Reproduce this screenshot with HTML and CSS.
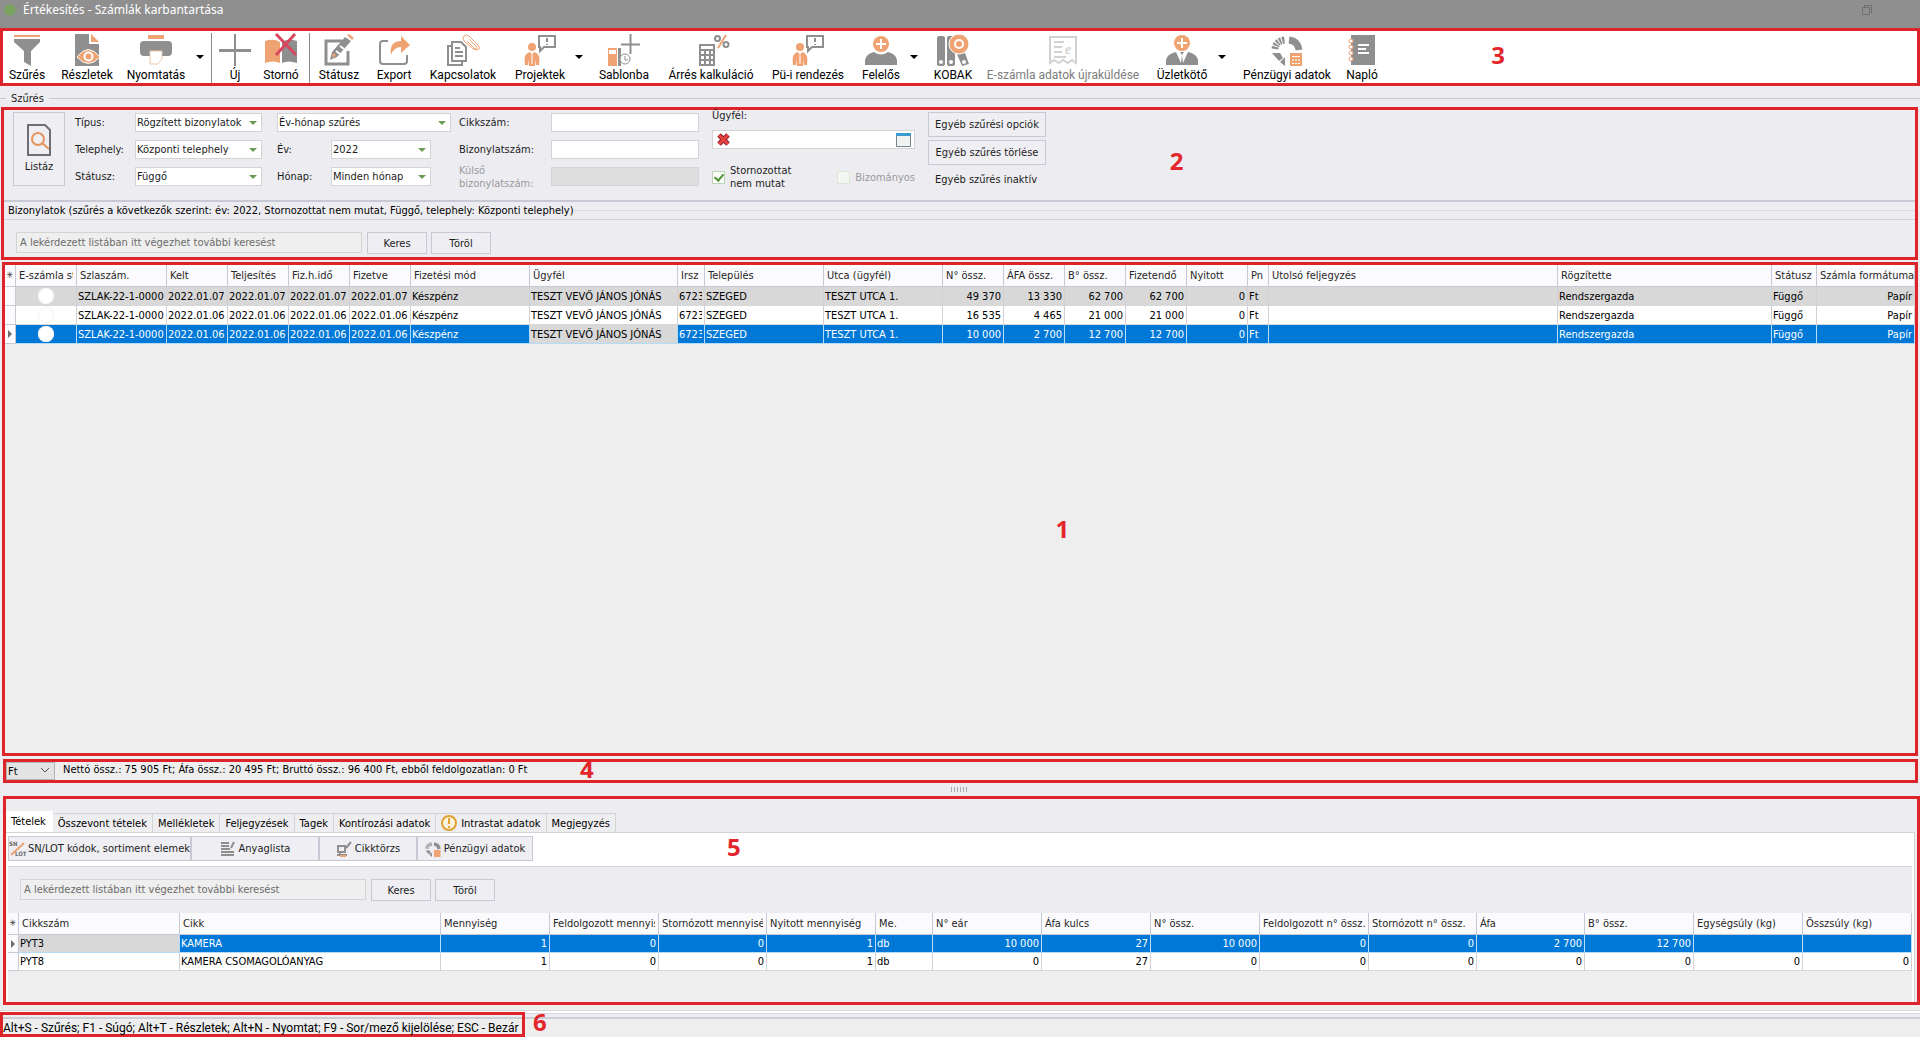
FILE: index.html
```html
<!DOCTYPE html>
<html lang="hu">
<head>
<meta charset="utf-8">
<title>Értékesítés - Számlák karbantartása</title>
<link rel="stylesheet" href="styles.css">
</head>
<body>
<header class="titlebar">
  <svg class="app-icon" viewBox="0 0 14 14" aria-hidden="true"><circle cx="7" cy="7" r="5"/><path d="M7 0v14M0 7h14M2 2l10 10M12 2L2 12"/></svg>
  <h1 class="title">Értékesítés - Számlák karbantartása</h1>
  <button class="restore" aria-label="Visszaállítás"><svg viewBox="0 0 12 12"><path d="M1.500 3.500h7v7h-7zM3.500 3.500v-2h7v7h-2"/></svg></button>
</header>

<nav class="toolbar frame">
  <button class="tool"><svg class="ico" viewBox="0 0 32 32"><path class="o" d="M3 1h26v2H3z"/><path class="g" d="M3 5h26v3l-9 9v15l-7-4V17L3 8z"/></svg>Szűrés</button>
  <button class="tool"><svg class="ico" viewBox="0 0 32 32"><path class="g" d="M4 0h14v10h10v22H4z"/><path class="o" d="M20 0l8 8h-8z"/><path class="o ring" d="M6 23q11-15 23 0q-12 13-23 0z"/><circle class="w" cx="17.500" cy="22.500" r="5"/><circle class="o" cx="17.500" cy="22.500" r="3"/></svg>Részletek</button>
  <button class="tool"><svg class="ico" viewBox="0 0 32 32"><path class="o" d="M8 1h16v4H8z"/><rect class="g" y="7" width="32" height="15" rx="4"/><path class="paper" d="M10 17h12v8l-4 5h-8z"/></svg>Nyomtatás</button>
  <button class="drop" aria-label="Nyomtatás menü"></button>
  <span class="sep"></span>
  <button class="tool"><svg class="ico" viewBox="0 0 32 32"><path class="g" d="M15 0h2v15h15v3H17v14h-2V18H0v-3h15z"/></svg>Új</button>
  <button class="tool"><svg class="ico" viewBox="0 0 32 32"><path class="o" d="M0 7q9-3 15 1v21q-6-3-15 0z"/><path class="g" d="M32 7q-9-3-15 1v21q6-3 15 0z"/><path class="cross" d="M11 0l20 21M30 0L11 21"/></svg>Stornó</button>
  <span class="sep"></span>
  <button class="tool"><svg class="ico" viewBox="0 0 32 32"><path class="gs3" d="M19 7H3v23h22V17"/><path class="g" d="M7 26l2-8L22 3l6 4-14 16z"/><path class="o" d="M24 1l2-1 5 4-2 2zM9 21l2-2 2 2-3 3z"/><path class="ws" d="M13 17l4 3M17 12l4 3"/></svg>Státusz</button>
  <button class="tool"><svg class="ico" viewBox="0 0 32 32"><path class="gs2" d="M10 7H5q-3 0-3 3v17q0 3 3 3h21q3 0 3-3v-6"/><path class="o" d="M13 21q-2-14 10-14V2l9 9-9 8v-6q-7 0-10 8z"/></svg>Export</button>
  <button class="tool"><svg class="ico" viewBox="0 0 32 32"><path class="gs2" d="M5 8h9l5 5v14H5zM5 12H1v19h14v-4M8 14h5M8 18h8M8 22h8"/><path class="clip-line" d="M20 7l8 8q3 2 4 0t-1-4l-9-9q-3-2-5 0t0 5l9 8q2 1 3 0t0-3l-7-7"/></svg>Kapcsolatok</button>
  <button class="tool"><svg class="ico" viewBox="0 0 32 32"><circle class="o" cx="8" cy="13" r="4"/><path class="o" d="M1 31q-2-12 5-13l2 3 2-3q7 1 5 13h-3v-6l-1 7H5l-1-7v6z"/><path class="ws1" d="M8 21v9"/><path class="gs2" d="M15 2h16v11H20l-4 4v-4h-1zM23 4v4M23 10v1"/></svg>Projektek</button>
  <button class="drop" aria-label="Projektek menü"></button>
  <button class="tool"><svg class="ico" viewBox="0 0 32 32"><path class="o" d="M0 14h9v18H0z"/><path class="w" d="M1 16h7v4H1z"/><path class="g" d="M10 14h3v18h-3z"/><circle class="clock" cx="17" cy="25" r="5"/><path class="gs1" d="M17 22v4h3"/><path class="gs2" d="M22.500 0v20M13 10.500h19"/></svg>Sablonba</button>
  <button class="tool"><svg class="ico" viewBox="0 0 32 32"><path class="gs2" d="M5 11h14v20H5zM5 16h14M5 21h14M5 26h14M10 16v15M15 16v15"/><circle class="gs2" cx="22.500" cy="4.500" r="2.500"/><circle class="gs2" cx="31" cy="10.500" r="2.500"/><path class="os" d="M31 1l-8 13"/></svg>Árrés kalkuláció</button>
  <button class="tool"><svg class="ico" viewBox="0 0 32 32"><circle class="o" cx="8" cy="13" r="4"/><path class="o" d="M1 31q-2-12 5-13l2 3 2-3q7 1 5 13h-3v-6l-1 7H5l-1-7v6z"/><path class="ws1" d="M8 21v9"/><path class="gs2" d="M15 2h16v11H20l-4 4v-4h-1zM23 4v4M23 10v1"/></svg>Pü-i rendezés</button>
  <button class="tool"><svg class="ico" viewBox="0 0 32 32"><path class="g" d="M0 31v-5q1-6 9-8 7 5 14 0 8 2 9 8v5z"/><circle class="o" cx="16" cy="10" r="8"/><path class="ws" d="M16 5v10M11 10h10"/></svg>Felelős</button>
  <button class="drop" aria-label="Felelős menü"></button>
  <button class="tool"><svg class="ico" viewBox="0 0 32 32"><rect class="g" x="0" y="2" width="8" height="30" rx="2"/><rect class="g" x="10" y="2" width="8" height="30" rx="2"/><path class="g" d="M20 20l8-1 4 11-7 2z"/><circle class="w" cx="4" cy="28" r="2"/><circle class="w" cx="14" cy="28" r="2"/><circle class="w" cx="27" cy="28" r="2"/><circle class="o ring" cx="22" cy="10" r="10"/><circle class="w" cx="22" cy="10" r="5"/><circle class="o" cx="22" cy="10" r="3"/></svg>KOBAK</button>
  <button class="tool" disabled><svg class="ico" viewBox="0 0 32 32"><path class="ls" d="M3 3h26v26l-4-3-4 3-5-3-4 3-5-3-4 3zM7 8h10M7 13h8M7 18h8M7 23h12"/><text class="ico-e" x="18" y="20">e</text></svg>E-számla adatok újraküldése</button>
  <button class="tool spaced"><svg class="ico" viewBox="0 0 32 32"><path class="g" d="M0 31v-5q1-6 10-8l5 11 1-8-2-3h4l-2 3 1 8 5-11q9 2 10 8v5z"/><circle class="o" cx="16" cy="9" r="8"/><path class="ws" d="M16 4v10M11 9h10"/></svg>Üzletkötő</button>
  <button class="drop" aria-label="Üzletkötő menü"></button>
  <button class="tool"><svg class="ico" viewBox="0 0 32 32"><path class="arc" d="M18 6q9 1 10 10"/><path class="arc dash" d="M4 15q1-8 10-9"/><path class="g" d="M1 19h8l3 5-4 3zM9 28l5-5v9z"/><path class="o" d="M19 19h12v13H19z"/><path class="ws1" d="M21 22.500h8M21 26h2M24 26h2M27 26h2M21 29.500h2M24 29.500h2M27 29.500h2"/></svg>Pénzügyi adatok</button>
  <button class="tool"><svg class="ico" viewBox="0 0 32 32"><path class="g" d="M5 1h24v30H5z"/><path class="ws" d="M12 11h11M12 15h8M12 19h11"/><g class="coil"><circle cx="5" cy="7" r="2"/><circle cx="5" cy="13" r="2"/><circle cx="5" cy="19" r="2"/><circle cx="5" cy="25" r="2"/></g></svg>Napló</button>
  <b class="num num3">3</b>
</nav>

<div class="legend"><span>Szűrés</span></div>

<section class="filters frame">
  <form class="criteria">
    <button type="button" class="btn list-btn"><svg viewBox="0 0 24 32"><path class="doc" d="M1 1h17l5 5v25H1z"/><circle class="lens" cx="11" cy="15" r="6"/><path class="lens" d="M15 19l7 6"/></svg>Listáz</button>

    <div class="fields f-main">
      <label for="tipus">Típus:</label><span class="sel"><select id="tipus"><option>Rögzített bizonylatok</option></select></span>
      <label for="telep">Telephely:</label><span class="sel"><select id="telep"><option>Központi telephely</option></select></span>
      <label for="stat">Státusz:</label><span class="sel"><select id="stat"><option>Függő</option></select></span>
    </div>

    <div class="fields f-period">
      <span class="sel wide"><select id="mod" aria-label="Időszak"><option>Év-hónap szűrés</option></select></span>
      <label for="ev">Év:</label><span class="sel"><select id="ev"><option>2022</option></select></span>
      <label for="ho">Hónap:</label><span class="sel"><select id="ho"><option>Minden hónap</option></select></span>
    </div>

    <div class="fields f-doc">
      <label for="cikk">Cikkszám:</label><input id="cikk" type="text">
      <label for="biz">Bizonylatszám:</label><input id="biz" type="text">
      <label for="kulso" class="off">Külső<br>bizonylatszám:</label><input id="kulso" type="text" disabled>
    </div>

    <div class="customer">
      <label for="ugyfel">Ügyfél:</label>
      <div class="lookup">
        <button type="button" class="mini" aria-label="Ügyfél törlése"><svg viewBox="0 0 15 15"><path class="del" d="M3 3l9 9M12 3l-9 9"/><path class="del2" d="M3 3l9 9M12 3l-9 9"/></svg></button>
        <input id="ugyfel" type="text">
        <button type="button" class="mini" aria-label="Ügyfél választása"><svg viewBox="0 0 15 15"><path class="win" d="M.5 1.500h14v13H.5z"/><path class="wintop" d="M0 1h15v3H0z"/></svg></button>
      </div>
      <div class="checks">
        <label class="chk"><input type="checkbox" checked><span>Stornozottat<br>nem mutat</span></label>
        <label class="chk off"><input type="checkbox" disabled><span>Bizományos</span></label>
      </div>
    </div>

    <div class="extra">
      <button type="button" class="btn">Egyéb szűrési opciók</button>
      <button type="button" class="btn">Egyéb szűrés törlése</button>
      <span>Egyéb szűrés inaktív</span>
    </div>
  </form>
  <div class="caption"><span>Bizonylatok (szűrés a következők szerint: év: 2022, Stornozottat nem mutat, Függő, telephely: Központi telephely)</span></div>
  <form class="search">
    <input type="text" aria-label="Keresés" placeholder="A lekérdezett listában itt végezhet további keresést">
    <button type="button" class="btn">Keres</button>
    <button type="button" class="btn">Töröl</button>
  </form>
  <b class="num num2">2</b>
</section>

<section class="invoices frame">
  <table class="data inv">
    <colgroup><col class="w11"><col class="w61"><col class="w90"><col class="w61"><col class="w61"><col class="w61"><col class="w61"><col class="w119"><col class="w148"><col class="w27"><col class="w119"><col class="w119"><col class="w61"><col class="w61"><col class="w61"><col class="w61"><col class="w61"><col class="w21"><col><col class="w214"><col class="w45"><col class="w98"></colgroup>
    <thead><tr><th class="mk">✳</th><th><span class="clip">E-számla státusz</span></th><th>Szlaszám.</th><th>Kelt</th><th>Teljesítés</th><th>Fiz.h.idő</th><th>Fizetve</th><th>Fizetési mód</th><th>Ügyfél</th><th>Irsz</th><th>Település</th><th>Utca (ügyfél)</th><th>N° össz.</th><th>ÁFA össz.</th><th>B° össz.</th><th>Fizetendő</th><th>Nyitott</th><th>Pn</th><th>Utolsó feljegyzés</th><th>Rögzítette</th><th>Státusz</th><th>Számla formátuma</th></tr></thead>
    <tbody>
      <tr class="grey"><td class="mk"></td><td class="c"><i class="dot"></i></td><td><span class="clip">SZLAK-22-1-000003</span></td><td>2022.01.07</td><td>2022.01.07</td><td>2022.01.07</td><td>2022.01.07</td><td>Készpénz</td><td>TESZT VEVŐ JÁNOS JÓNÁS</td><td><span class="clip">6723</span></td><td>SZEGED</td><td>TESZT UTCA 1.</td><td class="r">49 370</td><td class="r">13 330</td><td class="r">62 700</td><td class="r">62 700</td><td class="r">0</td><td>Ft</td><td></td><td>Rendszergazda</td><td>Függő</td><td class="r">Papír</td></tr>
      <tr><td class="mk"></td><td class="c"><i class="dot"></i></td><td><span class="clip">SZLAK-22-1-000002</span></td><td>2022.01.06</td><td>2022.01.06</td><td>2022.01.06</td><td>2022.01.06</td><td>Készpénz</td><td>TESZT VEVŐ JÁNOS JÓNÁS</td><td><span class="clip">6723</span></td><td>SZEGED</td><td>TESZT UTCA 1.</td><td class="r">16 535</td><td class="r">4 465</td><td class="r">21 000</td><td class="r">21 000</td><td class="r">0</td><td>Ft</td><td></td><td>Rendszergazda</td><td>Függő</td><td class="r">Papír</td></tr>
      <tr class="blue"><td class="mk"><i class="cur"></i></td><td class="c"><i class="dot"></i></td><td><span class="clip">SZLAK-22-1-000001</span></td><td>2022.01.06</td><td>2022.01.06</td><td>2022.01.06</td><td>2022.01.06</td><td>Készpénz</td><td class="focus">TESZT VEVŐ JÁNOS JÓNÁS</td><td><span class="clip">6723</span></td><td>SZEGED</td><td>TESZT UTCA 1.</td><td class="r">10 000</td><td class="r">2 700</td><td class="r">12 700</td><td class="r">12 700</td><td class="r">0</td><td>Ft</td><td></td><td>Rendszergazda</td><td>Függő</td><td class="r">Papír</td></tr>
    </tbody>
  </table>
  <b class="num num1">1</b>
</section>

<section class="totals frame">
  <select class="currency" aria-label="Pénznem"><option>Ft</option></select>
  <svg class="chev" viewBox="0 0 10 6"><path d="M1 1l4 4 4-4"/></svg>
  <span>Nettó össz.: 75 905 Ft; Áfa össz.: 20 495 Ft; Bruttó össz.: 96 400 Ft, ebből feldolgozatlan: 0 Ft</span>
  <b class="num num4">4</b>
</section>

<div class="splitter"><span></span></div>

<section class="details frame">
  <div class="tabs" role="tablist">
    <button role="tab" class="tab on">Tételek</button><button role="tab" class="tab">Összevont tételek</button><button role="tab" class="tab">Mellékletek</button><button role="tab" class="tab">Feljegyzések</button><button role="tab" class="tab">Tagek</button><button role="tab" class="tab">Kontírozási adatok</button><button role="tab" class="tab"><svg class="warn" viewBox="0 0 16 16"><circle cx="8" cy="8" r="7"/><path d="M8 3v6M8 11v2"/></svg>Intrastat adatok</button><button role="tab" class="tab">Megjegyzés</button>
  </div>
  <div class="page">
    <div class="actions">
      <button class="btn"><svg class="sm" viewBox="0 0 16 16"><path class="os" d="M2 14L15 2"/><text class="tiny" x="0" y="5">SN</text><text class="tiny" x="6" y="15">LOT</text></svg>SN/LOT kódok, sortiment elemek</button>
      <button class="btn"><svg class="sm" viewBox="0 0 16 16"><path class="gs2" d="M1 2h8M1 5h8M1 8h9M1 11h13M1 14h13M11 7l3-6"/></svg>Anyaglista</button>
      <button class="btn"><svg class="sm" viewBox="0 0 16 16"><path class="gs2" d="M2 5h7v6H2zM1 14h10M4 11v3M10 7l5-6"/><path class="o" d="M4 14h6v2H4z"/></svg>Cikktörzs</button>
      <button class="btn"><svg class="sm" viewBox="0 0 32 32"><path class="arc" d="M18 6q9 1 10 10"/><path class="arc dash" d="M4 15q1-8 10-9"/><path class="g" d="M1 19h8l3 5-4 3zM9 28l5-5v9z"/><path class="o" d="M18 18h13v14H18z"/></svg>Pénzügyi adatok</button>
    </div>
    <div class="items">
      <form class="search">
        <input type="text" aria-label="Keresés a tételekben" placeholder="A lekérdezett listában itt végezhet további keresést">
        <button type="button" class="btn">Keres</button>
        <button type="button" class="btn">Töröl</button>
      </form>
      <table class="data itm">
        <colgroup><col class="w11"><col class="w161"><col class="w261"><col class="w109"><col class="w109"><col class="w108"><col class="w109"><col class="w57"><col class="w109"><col class="w109"><col class="w109"><col class="w109"><col class="w108"><col class="w108"><col class="w109"><col class="w109"><col></colgroup>
        <thead><tr><th class="mk">✳</th><th>Cikkszám</th><th>Cikk</th><th>Mennyiség</th><th><span class="clip">Feldolgozott mennyiség</span></th><th><span class="clip">Stornózott mennyiség</span></th><th>Nyitott mennyiség</th><th>Me.</th><th>N° eár</th><th>Áfa kulcs</th><th>N° össz.</th><th>Feldolgozott n° össz.</th><th>Stornózott n° össz.</th><th>Áfa</th><th>B° össz.</th><th>Egységsúly (kg)</th><th>Összsúly (kg)</th></tr></thead>
        <tbody>
          <tr class="blue"><td class="mk"><i class="cur"></i></td><td class="focus">PYT3</td><td>KAMERA</td><td class="r">1</td><td class="r">0</td><td class="r">0</td><td class="r">1</td><td>db</td><td class="r">10 000</td><td class="r">27</td><td class="r">10 000</td><td class="r">0</td><td class="r">0</td><td class="r">2 700</td><td class="r">12 700</td><td></td><td></td></tr>
          <tr><td class="mk"></td><td>PYT8</td><td>KAMERA CSOMAGOLÓANYAG</td><td class="r">1</td><td class="r">0</td><td class="r">0</td><td class="r">1</td><td>db</td><td class="r">0</td><td class="r">27</td><td class="r">0</td><td class="r">0</td><td class="r">0</td><td class="r">0</td><td class="r">0</td><td class="r">0</td><td class="r">0</td></tr>
        </tbody>
      </table>
    </div>
  </div>
  <b class="num num5">5</b>
</section>

<footer class="status">
  <div class="hints frame">Alt+S - Szűrés; F1 - Súgó; Alt+T - Részletek; Alt+N - Nyomtat; F9 - Sor/mező kijelölése; ESC - Bezár</div>
  <b class="num6">6</b>
</footer>
</body>
</html>
```
FILE: styles.css
```css
:root {
  --ui: "DejaVu Sans Condensed", "DejaVu Sans", sans-serif;
  --bg: #ededf1;
  --red: #dc242a;
  --line: #c9c9d6;
  --field: #d4d4d4;
  --grey: #8f8f8f;
  --orange: #efa372;
  --blue: #0078d7;
}
*, *::before, *::after { box-sizing: border-box; }
body {
  margin: 0;
  min-height: 100vh;
  display: flex;
  flex-direction: column;
  background: var(--bg);
  font: 11px/13px var(--ui);
  color: #1c1c1c;
}
button, input, select { font: inherit; color: inherit; margin: 0; }
button { padding: 0; border: 0; background: none; }
input[type="text"], select {
  min-width: 0;
  height: 19px;
  padding: 0 1px;
  border: 1px solid var(--field);
  border-radius: 0;
  background: #fff;
  appearance: none;
}
.frame { border: 3px solid var(--red); position: relative; }
.num, .num6 { font: bold 24px/24px "Open Sans", sans-serif; color: #e2262c; }
.num { position: absolute; }

.titlebar {
  height: 28px;
  display: flex;
  align-items: flex-start;
  gap: 6px;
  padding: 2px 47px 0 3px;
  background: var(--grey);
  color: #fff;
}
.app-icon { width: 14px; height: 14px; fill: #7aa35f; stroke: #7aa35f; margin-top: 1px; }
.title { flex: 1; margin: 0; font: 12px/16px "Noto Sans", sans-serif; }
.restore svg { width: 12px; height: 12px; fill: none; stroke: #6f6f6f; display: block; margin-top: 2px; }

/* toolbar */
.toolbar {
  display: grid;
  grid-template-columns: 48px 72px 66px 21px 2px 46px 46px 6px 58px 52px 86px 68px 10px 80px 94px 100px 46px 20px 58px 162px 68px 20px 110px 40px;
  height: 58px;
  background: #fff;
}
.tool {
  display: flex;
  flex-direction: column;
  align-items: center;
  gap: 2px;
  padding-top: 3px;
  font: 12px/14px Roboto, sans-serif;
  color: #000;
  white-space: nowrap;
}
.tool:disabled { color: #7d7d7d; }
.spaced { margin-left: 8px; }
.drop::before {
  content: "";
  display: block;
  width: 8px;
  margin: 0 auto;
  border: 4px solid transparent;
  border-top-color: #000;
  border-bottom: 0;
}
.sep { border-right: 1px solid #8a8a8a; margin-top: 2px; }
.ico { width: 32px; height: 32px; overflow: visible; }
.sm { width: 16px; height: 16px; overflow: visible; }
.g { fill: var(--grey); }
.o { fill: var(--orange); }
.w { fill: #fff; }
.ring { stroke: #fff; stroke-width: 1; }
.paper { fill: #fff; stroke: #f0c4a4; }
.cross { stroke: #d9475f; stroke-width: 3; }
.gs1, .gs2, .gs3 { fill: none; stroke: var(--grey); stroke-width: 1; }
.gs2 { stroke-width: 2; }
.gs3 { stroke-width: 3; }
.os, .clip-line { fill: none; stroke: var(--orange); stroke-width: 2; }
.clip-line { stroke-width: 1; }
.ws, .ws1 { fill: none; stroke: #fff; stroke-width: 2; }
.ws1 { stroke-width: 1; }
.ls { fill: none; stroke: #d2d2d2; stroke-width: 2; }
.clock { fill: #fff; stroke: var(--grey); stroke-width: 1; }
.arc { fill: none; stroke: var(--grey); stroke-width: 7; }
.dash { stroke-dasharray: 2 1; }
.coil { fill: #fff; stroke: var(--orange); stroke-width: 1; }
.ico-e { font: italic bold 14px "Liberation Serif", serif; fill: #d2d2d2; }
.tiny { font: bold 6px var(--ui); fill: #6a6a6a; }
.num3 { right: 412px; top: 12px; }

.legend { height: 21px; display: flex; align-items: center; gap: 5px; padding-top: 3px; }
.legend::before, .legend::after { content: ""; height: 1px; background: var(--line); width: 6px; }
.legend::after { flex: 1; }

/* filters */
.filters { margin: 0 2px 2px 1px; height: 153px; }
.btn { border: 1px solid var(--line); background: #efeff3; text-align: center; }
.criteria { display: flex; align-items: flex-start; padding: 2px 0 0 9px; height: 92px; border-bottom: 2px solid var(--line); }
.list-btn {
  width: 52px;
  height: 74px;
  display: flex;
  flex-direction: column;
  align-items: center;
  gap: 4px;
  padding-top: 11px;
  margin-right: 10px;
}
.list-btn svg { width: 24px; height: 32px; fill: none; }
.doc { stroke: #6e6e76; stroke-width: 2; }
.lens { stroke: #e6935c; stroke-width: 2; fill: none; }
.fields { display: grid; grid-auto-rows: 19px; row-gap: 8px; align-items: center; padding-top: 1px; }
.f-main { grid-template-columns: 60px 127px; margin-right: 15px; }
.f-period { grid-template-columns: 54px 100px 20px; margin-right: 8px; }
.f-period label { grid-column: 1; }
.wide { grid-column: 1 / 4; }
.f-doc { grid-template-columns: 92px 148px; margin-right: 13px; }
.f-doc input:disabled { background: #dedede; }
.off { color: #9a9a9a; }
.sel { position: relative; display: block; }
.sel select { width: 100%; display: block; }
.sel::after {
  content: "";
  position: absolute;
  right: 5px;
  top: 8px;
  border: 4px solid transparent;
  border-top-color: #6b9b52;
  border-bottom: 0;
  pointer-events: none;
}
.customer { width: 203px; margin-right: 13px; }
.customer > label { display: block; height: 18px; line-height: 8px; }
.lookup { display: flex; align-items: center; height: 19px; border: 1px solid var(--field); background: #fff; padding: 0 3px; }
.lookup input { flex: 1; height: 17px; border: 0; }
.mini svg { width: 15px; height: 15px; display: block; }
.del { stroke: #8e1f33; stroke-width: 5; }
.del2 { stroke: #e5433f; stroke-width: 3; }
.win { fill: #f1f3f3; stroke: #77848c; }
.wintop { fill: #3b9bd0; }
.checks { display: flex; align-items: center; justify-content: space-between; padding-top: 15px; }
.chk { display: flex; align-items: center; gap: 5px; }
.chk input { appearance: none; width: 13px; height: 13px; border: 1px solid #bcd3b5; background: #fbfdfa; display: grid; place-items: center; }
.chk input:checked::after { content: ""; width: 6px; height: 9px; border: solid #4f9437; border-width: 0 2px 2px 0; transform: rotate(40deg); margin-bottom: 2px; }
.chk input:disabled { border-color: #dbe6d7; background: #f4f6f3; }
.extra { display: flex; flex-direction: column; gap: 3px; width: 118px; }
.extra .btn { height: 25px; white-space: nowrap; }
.extra span { padding: 5px 0 0 7px; white-space: nowrap; }
.caption { height: 18px; display: flex; align-items: center; border-bottom: 1px solid #d5d5de; padding-left: 4px; color: #000; }
.caption::after { content: ""; flex: 1; height: 1px; background: #dcdce3; }
.search { display: flex; gap: 4px; padding: 12px 0 0 12px; }
.search input { width: 346px; height: 21px; background: #efefef; padding: 0 3px; margin-right: 1px; }
.search input::placeholder { color: #6c6c6c; opacity: 1; }
.search .btn { width: 60px; height: 22px; }
.num2 { left: 61%; top: 39px; }

/* data grids */
.invoices { flex: 1; margin: 0 2px 3px; background: #eee; }
.data { width: 100%; table-layout: fixed; border-collapse: separate; border-spacing: 0; background: #fff; color: #000; }
.data th, .data td { overflow: hidden; white-space: nowrap; text-align: left; font-weight: normal; padding: 0 2px 0 1px; border-right: 1px solid #d0d0d6; }
.data th { height: 22px; padding: 0 3px; background: #fbfbfd; border-bottom: 1px solid var(--line); border-right-color: var(--line); color: #262626; }
.data td { height: 19px; border-bottom: 1px solid #d8d8d8; }
.data .r { text-align: right; }
.data .c { text-align: center; }
.data .mk { padding: 0; text-align: center; font-size: 9px; background: #fbfbfd; border-color: var(--line); }
.clip { display: block; overflow: hidden; }
.grey td { background: #d8d8d8; }
.blue td { background: var(--blue); color: #fff; border-color: #b5dcf7; }
.blue .focus { background: #d8d8d8; color: #000; }
.dot { display: block; width: 16px; height: 16px; margin: 0 auto; border-radius: 8px; background: #fff; box-shadow: inset 0 0 0 1px #f3f3f3; }
.cur { display: block; width: 4px; margin: 0 auto; border: 4px solid transparent; border-left-color: #6d6d6d; border-right: 0; }
.itm td { height: 18px; }
.w11 { width: 11px; } .w21 { width: 21px; } .w27 { width: 27px; } .w45 { width: 45px; } .w57 { width: 57px; }
.w61 { width: 61px; } .w90 { width: 90px; } .w98 { width: 98px; } .w108 { width: 108px; } .w109 { width: 109px; }
.w119 { width: 119px; } .w148 { width: 148px; } .w161 { width: 161px; } .w214 { width: 214px; } .w261 { width: 261px; }
.num1 { left: 55%; top: 252px; }

/* totals */
.totals { height: 24px; margin: 0 2px 0 3px; display: flex; align-items: flex-start; background: #eee; color: #000; }
.currency { width: 49px; height: 18px; border-color: #b5b5b5; background: #e3e3e3; padding: 0 1px; }
.chev { width: 10px; height: 6px; margin: 5px 9px 0 -15px; fill: none; stroke: #555; pointer-events: none; }
.totals span { padding: 1px 0 0 4px; }
.num4 { left: 574px; top: -5px; }
.splitter { height: 13px; display: grid; place-items: center; }
.splitter span { width: 18px; height: 5px; background: repeating-linear-gradient(90deg, #aaa 0 1px, transparent 1px 3px); }

/* details */
.details { height: 209px; margin: 0 0 0 3px; display: flex; flex-direction: column; padding: 12px 2px 0 0; }
.tabs { display: flex; align-items: flex-end; height: 21px; color: #000; }
.tab { height: 19px; padding: 0 5px; border: 1px solid var(--field); border-width: 1px 1px 0 0; background: #eeeef0; display: flex; align-items: center; gap: 4px; white-space: nowrap; }
.tab.on { height: 21px; background: #fff; border-color: #fff; padding: 0 6px 2px 5px; }
.warn { width: 16px; height: 16px; fill: #fdf3dc; stroke: #dfa233; stroke-width: 2; }
.page { flex: 1; display: flex; flex-direction: column; background: #fff; border: 1px solid var(--field); border-width: 1px 1px 0 0; padding: 3px 2px 0 2px; }
.actions { display: grid; grid-template-columns: 183px 128px 98px 116px; padding-bottom: 5px; }
.actions .btn { height: 25px; display: flex; align-items: center; justify-content: center; gap: 3px; white-space: nowrap; }
.items { flex: 1; border-top: 1px solid var(--field); background: linear-gradient(var(--bg) 60px, #eee 60px); }
.items .search { padding-bottom: 12px; }
.num5 { left: 721px; top: 36px; }

/* status bar */
.status {
  height: 32px;
  padding-top: 7px;
  display: flex;
  align-items: center;
  gap: 8px;
  background: linear-gradient(#eee 5px, #d6d6d6 5px 6px, #fff 6px 8px, #d6d6dc 8px 9px, var(--bg) 9px 12px, #cdcdd6 12px 14px, #eee 14px);
}
.hints { width: 525px; height: 25px; padding: 6px 0 0; font: 12px/14px Roboto, sans-serif; color: #000; white-space: nowrap; }
.num6 { margin-top: -6px; }
```
